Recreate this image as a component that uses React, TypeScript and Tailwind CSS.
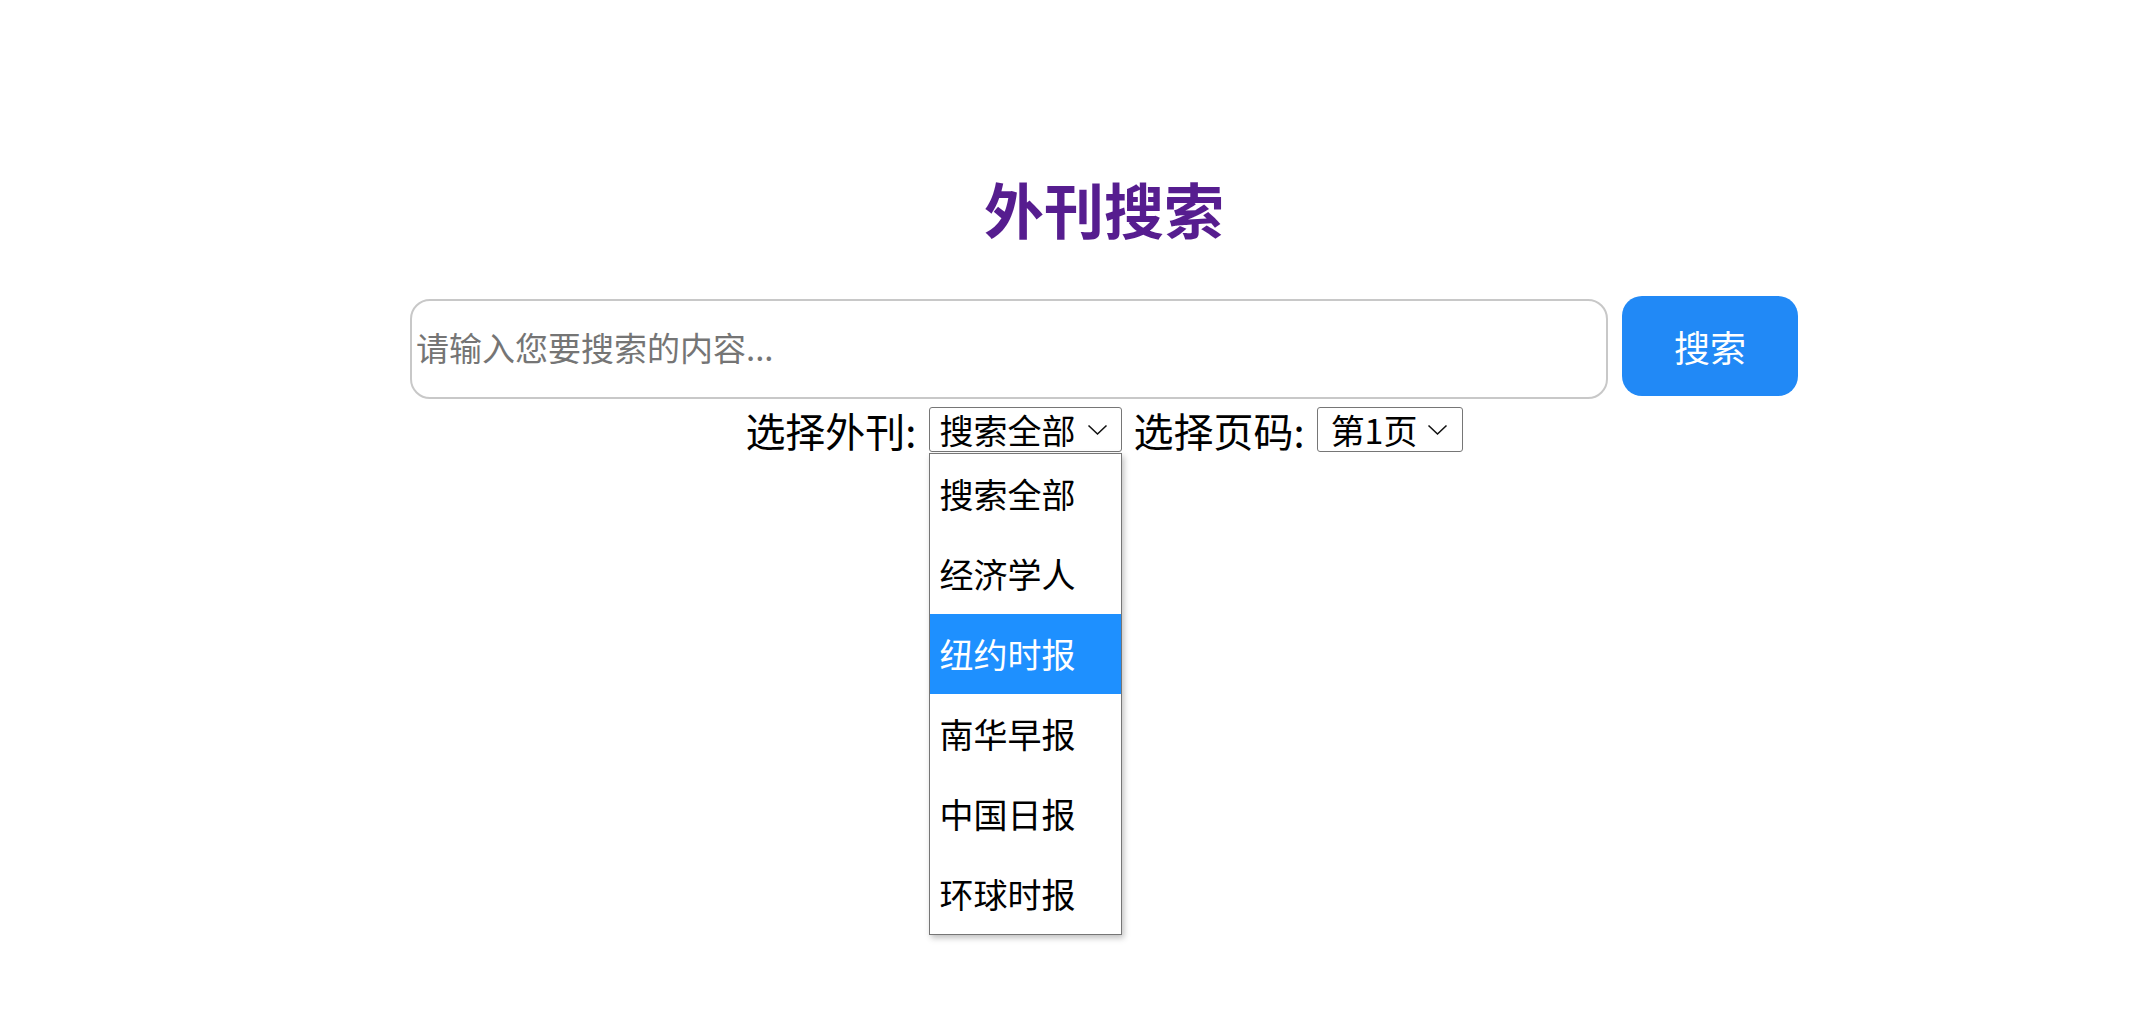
import { useState } from "react";

const cjk = "font-['Microsoft_YaHei','Noto_Sans_CJK_SC',sans-serif]";

const sources = ["搜索全部", "经济学人", "纽约时报", "南华早报", "中国日报", "环球时报"];

function Chevron() {
  return (
    <svg width="21" height="12" viewBox="0 0 21 12" fill="none" className="shrink-0">
      <polyline points="1.5,1.5 10.5,10 19.5,1.5" stroke="#111" strokeWidth="1.6" />
    </svg>
  );
}

function FakeSelect({
  value,
  className,
  open,
  options,
  highlight,
}: {
  value: string;
  className: string;
  open?: boolean;
  options?: string[];
  highlight?: string;
}) {
  return (
    <div className="relative">
      <div
        className={`flex h-[45px] items-center justify-between rounded-[3px] border border-[#767676] bg-white text-[34px] leading-none text-black ${className}`}
      >
        <span>{value}</span>
        <Chevron />
      </div>
      {open && options && (
        <ul className="absolute left-0 top-full mt-[1px] w-full border border-[#767676] bg-white shadow-[2px_3px_6px_rgba(0,0,0,0.25)]">
          {options.map((o) => (
            <li
              key={o}
              className={`flex h-[80px] items-center pl-[10px] text-[34px] leading-none ${
                o === highlight ? "bg-[#1e90ff] text-white" : "text-black"
              }`}
            >
              {o}
            </li>
          ))}
        </ul>
      )}
    </div>
  );
}

export default function App() {
  const [query, setQuery] = useState("");

  return (
    <div className={`min-h-[1015px] w-full bg-white pl-[60px] ${cjk}`}>
      <div className="flex flex-col items-center pt-[175px]">
        <h1 className="text-[60px] font-bold leading-[66px] text-[#561d8f]">外刊搜索</h1>

        <div className="mt-[55px] flex items-start gap-[14px]">
          <input
            value={query}
            onChange={(e) => setQuery(e.target.value)}
            placeholder="请输入您要搜索的内容..."
            className="mt-[3px] h-[100px] w-[1198px] rounded-[20px] border-2 border-[#c8c8c8] px-[4px] pb-[5px] text-[33px] text-black outline-none placeholder:text-[#757575]"
          />
          <button className="h-[100px] w-[176px] rounded-[20px] bg-[#2189f6] text-[36px] text-white">
            搜索
          </button>
        </div>

        <div className="mt-[8px] flex items-center gap-[12px] text-[40px] leading-none text-black">
          <span>选择外刊:</span>
          <FakeSelect
            value="搜索全部"
            className="w-[193px] pl-[10px] pr-[13px]"
            open
            options={sources}
            highlight="纽约时报"
          />
          <span>选择页码:</span>
          <FakeSelect value="第1页" className="w-[146px] pl-[13px] pr-[14px]" />
        </div>
      </div>
    </div>
  );
}
